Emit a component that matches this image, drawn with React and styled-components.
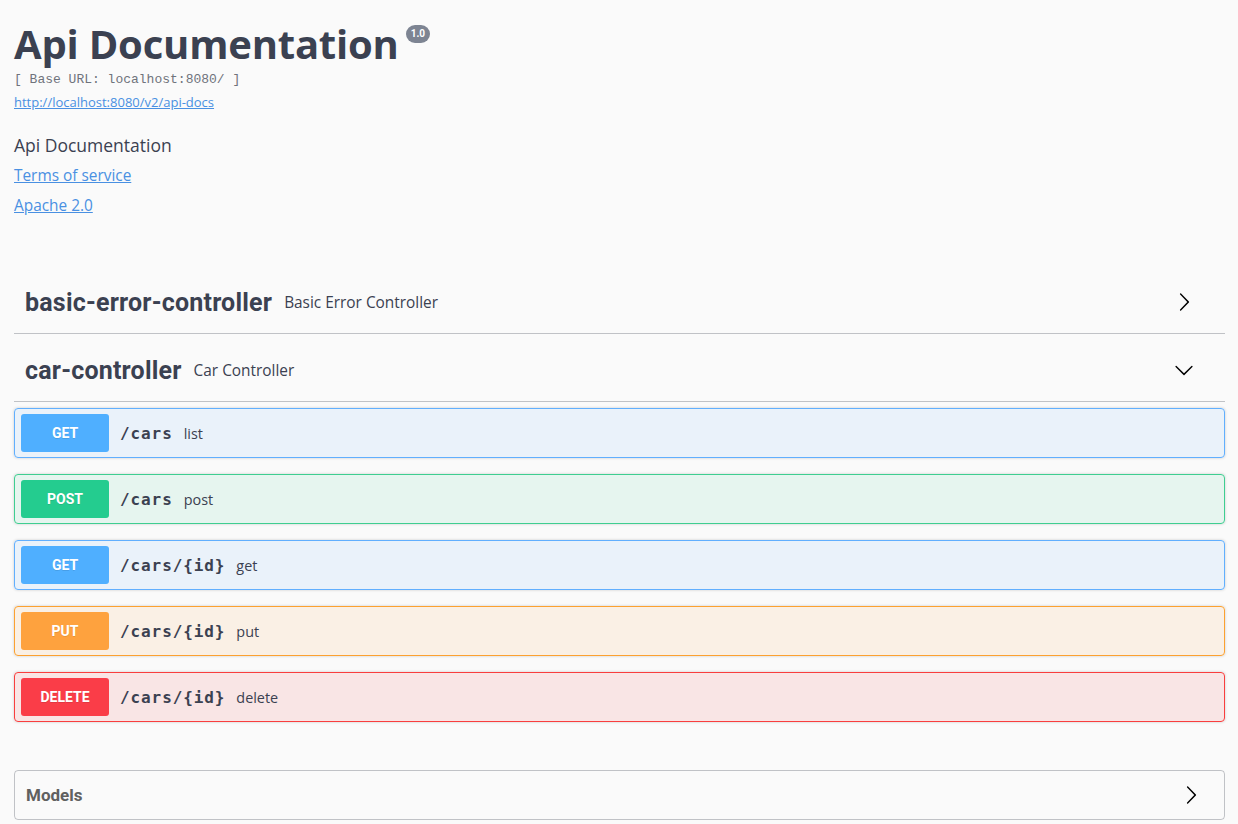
import React from 'react';
import styled, { createGlobalStyle } from 'styled-components';

const Global = createGlobalStyle`
  html, body { margin: 0; padding: 0; background: #fafafa; }
  body { font-family: "Open Sans", "Noto Sans", sans-serif; color: #3b4151; }
  * { box-sizing: border-box; }
`;

const Page = styled.div`
  padding: 18px 13px 40px 14px;
`;

const Info = styled.section`
  margin-bottom: 50px;
`;

const TitleRow = styled.div`
  display: flex;
  align-items: flex-start;
`;

const Title = styled.h2`
  margin: 0;
  font-size: 40px;
  font-weight: 700;
  line-height: 52px;
  color: #3b4151;
  letter-spacing: -0.2px;
`;

const Version = styled.span`
  margin: 7px 0 0 7px;
  background: #7d8492;
  color: #fff;
  border-radius: 57px;
  font-size: 10px;
  font-weight: 700;
  line-height: 14px;
  padding: 2px 5px;
  font-family: "Roboto", "Open Sans", sans-serif;
`;

const BaseUrl = styled.div`
  font-family: "Liberation Mono", "DejaVu Sans Mono", monospace;
  font-size: 13px;
  line-height: 18px;
  margin-top: 1px;
  color: #6f737c;
`;

const Link = styled.a`
  display: block;
  color: #4990e2;
  text-decoration: underline;
  font-size: ${p => p.$size || 15.4}px;
  line-height: ${p => p.$lh || 30}px;
`;

const Description = styled.div`
  margin-top: 15px;
  font-size: 17.5px;
  line-height: 31px;
  color: #3b4151;
`;

const TagHeader = styled.div`
  display: flex;
  align-items: center;
  height: 63px;
  padding: 0 31px 0 11px;
  border-bottom: 1px solid rgba(59, 65, 81, 0.3);
  margin-bottom: 5px;
`;

const TagName = styled.span`
  font-family: "Roboto", sans-serif;
  font-size: 25px;
  font-weight: 700;
  color: #3b4151;
  letter-spacing: 0.2px;
`;

const TagDesc = styled.span`
  flex: 1;
  margin-left: 12px;
  font-size: 15.4px;
  color: #3b4151;
`;

const OpList = styled.div`
  padding-top: 1px;
`;

const colors = {
  get: { main: '#4fafff', border: '#61affe', bg: 'rgba(97,175,254,.1)' },
  post: { main: '#24cc8f', border: '#3fce91', bg: 'rgba(60,204,144,.1)' },
  put: { main: '#fea23e', border: '#fca130', bg: 'rgba(252,161,48,.1)' },
  delete: { main: '#fa3d48', border: '#f93e3e', bg: 'rgba(249,62,62,.11)' },
};

const Opblock = styled.div`
  display: flex;
  align-items: center;
  height: 50px;
  padding: 0 6px;
  margin-bottom: 16px;
  border: 1px solid ${p => colors[p.$m].border};
  background: ${p => colors[p.$m].bg};
  border-radius: 4px;
  box-shadow: 0 0 3px rgba(0, 0, 0, 0.19);
`;

const Method = styled.span`
  width: 88px;
  height: 38px;
  display: flex;
  align-items: center;
  justify-content: center;
  border-radius: 3px;
  background: ${p => colors[p.$m].main};
  color: #fff;
  font-family: "Roboto", sans-serif;
  font-weight: 700;
  font-size: 14px;
  text-shadow: 0 1px 0 rgba(0, 0, 0, 0.1);
`;

const Path = styled.span`
  margin-left: 11px;
  font-family: "DejaVu Sans Mono", monospace;
  font-weight: 700;
  font-size: 16px;
  letter-spacing: 0.9px;
  color: #3b4151;
`;

const OpDesc = styled.span`
  margin-left: 11px;
  font-size: 14.4px;
  color: #3b4151;
`;

const Models = styled.section`
  margin-top: 48px;
  height: 50px;
  border: 1px solid rgba(59, 65, 81, 0.3);
  border-radius: 4px;
  display: flex;
  align-items: center;
  padding: 0 23px 0 11px;
`;

const ModelsTitle = styled.span`
  flex: 1;
  font-family: "Roboto", sans-serif;
  font-size: 17px;
  font-weight: 700;
  color: #606060;
`;

const Arrow = ({ down }) => (
  <svg width="20" height="20" viewBox="0 0 20 20" style={{ transform: down ? 'rotate(90deg)' : 'none' }}>
    <path
      fill="#000"
      d="M13.25 10L6.109 2.58a.697.697 0 0 1 0-.979.68.68 0 0 1 .969 0l7.83 7.908a.697.697 0 0 1 0 .979l-7.83 7.908a.68.68 0 0 1-.969 0 .697.697 0 0 1 0-.979L13.25 10z"
    />
  </svg>
);

const ops = [
  { m: 'get', label: 'GET', path: '/cars', desc: 'list' },
  { m: 'post', label: 'POST', path: '/cars', desc: 'post' },
  { m: 'get', label: 'GET', path: '/cars/{id}', desc: 'get' },
  { m: 'put', label: 'PUT', path: '/cars/{id}', desc: 'put' },
  { m: 'delete', label: 'DELETE', path: '/cars/{id}', desc: 'delete' },
];

export default function App() {
  return (
    <>
      <Global />
      <Page>
        <Info>
          <TitleRow>
            <Title>Api Documentation</Title>
            <Version>1.0</Version>
          </TitleRow>
          <BaseUrl>[ Base URL: localhost:8080/ ]</BaseUrl>
          <Link href="#" $size={13} $lh={26}>http://localhost:8080/v2/api-docs</Link>
          <Description>Api Documentation</Description>
          <Link href="#">Terms of service</Link>
          <Link href="#">Apache 2.0</Link>
        </Info>

        <section>
          <TagHeader>
            <TagName>basic-error-controller</TagName>
            <TagDesc>Basic Error Controller</TagDesc>
            <Arrow />
          </TagHeader>
        </section>

        <section>
          <TagHeader>
            <TagName>car-controller</TagName>
            <TagDesc>Car Controller</TagDesc>
            <Arrow down />
          </TagHeader>
          <OpList>
            {ops.map((o, i) => (
              <Opblock key={i} $m={o.m}>
                <Method $m={o.m}>{o.label}</Method>
                <Path>{o.path}</Path>
                <OpDesc>{o.desc}</OpDesc>
              </Opblock>
            ))}
          </OpList>
        </section>

        <Models>
          <ModelsTitle>Models</ModelsTitle>
          <Arrow />
        </Models>
      </Page>
    </>
  );
}
